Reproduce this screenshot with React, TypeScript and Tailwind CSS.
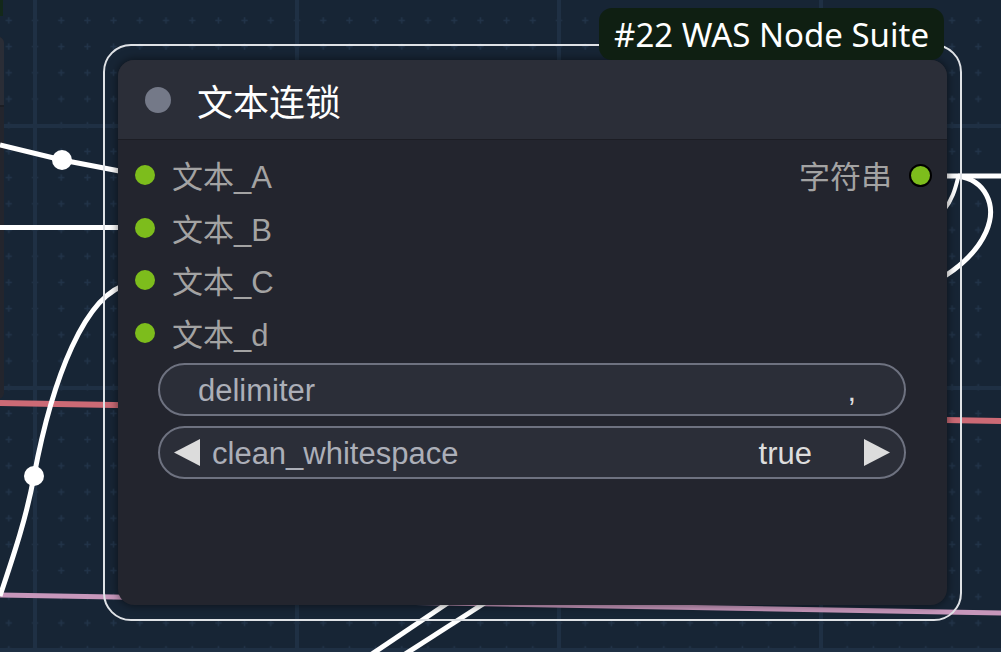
import React from "react";

const font = "font-['Liberation_Sans','Noto_Sans_CJK_SC',sans-serif]";

function Background() {
  const vx = [35, 297, 559, 821];
  const hy = [126, 388, 650];
  return (
    <svg className="absolute left-0 top-0" width="1001" height="652">
      <defs>
        <pattern id="marks" x="21.9" y="7.3" width="26.2" height="26.2" patternUnits="userSpaceOnUse">
          <path d="M13.1 10v6.2M10 13.1h6.2" stroke="#223449" strokeWidth="1.5" />
        </pattern>
      </defs>
      <rect width="1001" height="652" fill="url(#marks)" />
      {vx.map((x) => (
        <line key={x} x1={x} y1={0} x2={x} y2={652} stroke="#1f3044" strokeWidth="4" />
      ))}
      {hy.map((y) => (
        <line key={y} x1={0} y1={y} x2={1001} y2={y} stroke="#1f3044" strokeWidth="4" />
      ))}
    </svg>
  );
}

function Wires() {
  return (
    <svg className="absolute left-0 top-0" width="1001" height="652">
      {/* red link */}
      <line x1="0" y1="403" x2="1001" y2="421" stroke="#cc6a75" strokeWidth="6" />
      {/* pink link */}
      <line x1="0" y1="595" x2="1001" y2="613" stroke="#c797bb" strokeWidth="5" />
      {/* input A */}
      <polyline points="0,145 62,160 130,173" fill="none" stroke="#ffffff" strokeWidth="5" />
      <circle cx="62" cy="160" r="10" fill="#ffffff" />
      {/* input B */}
      <line x1="0" y1="227.5" x2="130" y2="227.5" stroke="#ffffff" strokeWidth="5" />
      {/* input C */}
      <path d="M130 284 C 85 292, 52 380, 34 476 C 26 520, 12 560, 0 596" fill="none" stroke="#ffffff" strokeWidth="5" />
      <circle cx="34" cy="476" r="10" fill="#ffffff" />
      {/* bottom diagonals */}
      <line x1="366" y1="658" x2="470" y2="588" stroke="#ffffff" strokeWidth="5" />
      <line x1="399" y1="658" x2="508" y2="588" stroke="#ffffff" strokeWidth="5" />
      {/* output */}
      <line x1="930" y1="176" x2="1001" y2="176" stroke="#ffffff" strokeWidth="5" />
      <path d="M958 176 C 985 180, 998 205, 986 232 C 977 252, 962 265, 945 276" fill="none" stroke="#ffffff" strokeWidth="5" />
      <path d="M958 178 C 955 190, 952 200, 944 210" fill="none" stroke="#ffffff" strokeWidth="4" />
    </svg>
  );
}

function InputRow({ label }: { label: string }) {
  return (
    <div className="flex h-[52.5px] items-center pl-[17px]">
      <div className="h-[20px] w-[20px] rounded-full bg-[#7dbd1c]" />
      <span className="ml-[17px] pt-[6px] text-[31px] text-[#a3a3a3]">{label}</span>
    </div>
  );
}

export default function App() {
  return (
    <div className={`relative h-[652px] w-[1001px] overflow-hidden bg-[#172535] ${font}`}>
      <Background />
      {/* partial node at left edge */}
      <div className="absolute left-[-30px] top-[37px] flex h-[362px] w-[34px] flex-col overflow-hidden rounded-r-[6px] bg-[#23252d]">
        <div className="h-[70px] border-b-2 border-[#1c1e24] bg-[#2a2d36]" />
      </div>
      <div className="absolute left-0 top-0 h-[16px] w-[3px] bg-[#13281a]" />
      <Wires />

      {/* selected node */}
      <div className="absolute left-[103px] top-[44px] rounded-[28px] border-2 border-[#dfe2e6] px-[13px] py-[14px]">
        <div className="absolute right-[16px] top-[-38px] flex h-[52px] items-center rounded-[13px] bg-[#0f1f12] px-[15px] font-['Noto_Sans',sans-serif] text-[33px] leading-none text-white">
          #22 WAS Node Suite
        </div>
        <div className="flex h-[545px] w-[829px] flex-col overflow-hidden rounded-[16px] bg-[#23252e] shadow-[0_0_10px_rgba(0,0,0,0.55)]">
          <div className="flex h-[80px] shrink-0 items-center border-b border-[#1c1d24] bg-[#2b2e38] pl-[27px]">
            <div className="h-[26px] w-[26px] rounded-full bg-[#747988]" />
            <span className="ml-[26px] pt-[8px] text-[36px] text-white">文本连锁</span>
          </div>
          <div className="flex flex-col pt-[9px]">
            <div className="flex items-center justify-between pr-[15px]">
              <InputRow label="文本_A" />
              <div className="flex items-center">
                <span className="pt-[6px] text-[31px] text-[#a3a3a3]">字符串</span>
                <div className="ml-[17px] h-[23px] w-[23px] rounded-full border-[2.5px] border-black bg-[#7dbd1c]" />
              </div>
            </div>
            <InputRow label="文本_B" />
            <InputRow label="文本_C" />
            <InputRow label="文本_d" />
            <div className="ml-[40px] mr-[41px] mt-[4px] flex flex-col gap-[10px]">
              <div className="flex h-[53px] items-center justify-between rounded-full border-2 border-[#6e7280] bg-[#2b2e38] pl-[38px] pr-[48px] text-[31px]">
                <span className="pt-[4px] text-[#acafb8]">delimiter</span>
                <span className="pt-[4px] text-[#dddddd]">,</span>
              </div>
              <div className="flex h-[53px] items-center rounded-full border-2 border-[#6e7280] bg-[#2b2e38] pl-[14px] pr-[14px] text-[31px]">
                <svg width="27" height="27" viewBox="0 0 27 27">
                  <polygon points="26,0 26,27 0,13.5" fill="#dcdcdc" />
                </svg>
                <span className="ml-[11px] pt-[4px] text-[#acafb8]">clean_whitespace</span>
                <span className="ml-auto pt-[4px] text-[#dddddd]">true</span>
                <svg className="ml-[51px]" width="27" height="27" viewBox="0 0 27 27">
                  <polygon points="1,0 1,27 27,13.5" fill="#dcdcdc" />
                </svg>
              </div>
            </div>
          </div>
        </div>
      </div>
    </div>
  );
}
